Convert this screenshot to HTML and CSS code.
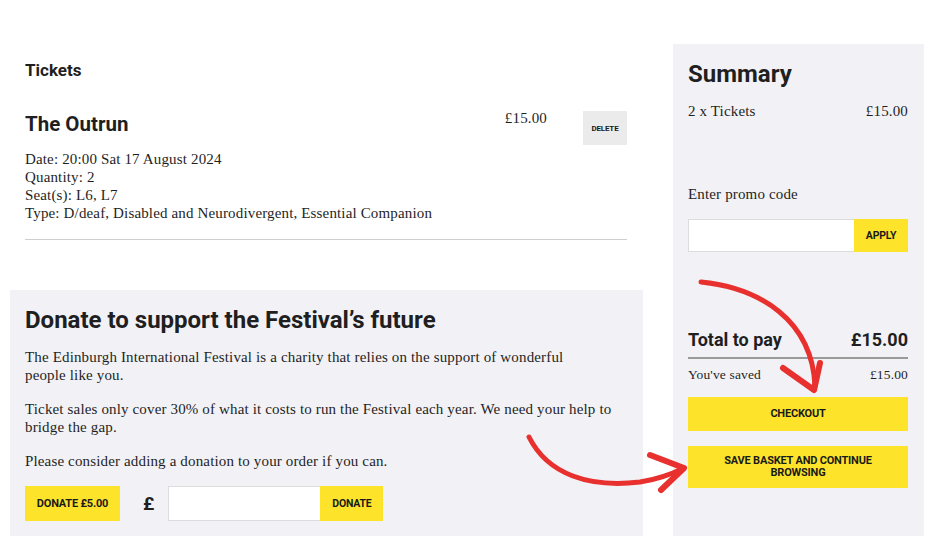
FILE: index.html
```html
<!DOCTYPE html>
<html lang="en">
<head>
    <meta charset="UTF-8">
    <meta name="viewport" content="width=device-width, initial-scale=1.0">
    <title>Basket</title>
    <link rel="stylesheet" href="styles.css">
</head>
<body>
    <div class="page">
        <main class="main">
            <section class="tickets">
                <h3 class="section-title">Tickets</h3>
                <div class="ticket">
                    <div class="ticket-info">
                        <h2 class="ticket-name">The Outrun</h2>
                        <p class="ticket-details">
                            Date: 20:00 Sat 17 August 2024<br>
                            Quantity: 2<br>
                            Seat(s): L6, L7<br>
                            Type: D/deaf, Disabled and Neurodivergent, Essential Companion
                        </p>
                    </div>
                    <div class="ticket-actions">
                        <span class="ticket-price">£15.00</span>
                        <button class="btn btn-grey">Delete</button>
                    </div>
                </div>
            </section>

            <section class="donate">
                <h2 class="donate-title">Donate to support the Festival’s future</h2>
                <p>The Edinburgh International Festival is a charity that relies on the support of wonderful<br>people like you.</p>
                <p>Ticket sales only cover 30% of what it costs to run the Festival each year. We need your help to bridge the gap.</p>
                <p>Please consider adding a donation to your order if you can.</p>
                <div class="donate-row">
                    <button class="btn btn-yellow donate-fixed">Donate £5.00</button>
                    <span class="pound">£</span>
                    <div class="field">
                        <input type="text" class="field-input donate-input">
                        <button class="btn btn-yellow donate-go">Donate</button>
                    </div>
                </div>
            </section>
        </main>

        <aside class="summary">
            <h2 class="summary-title">Summary</h2>
            <div class="line">
                <span>2 x Tickets</span>
                <span>£15.00</span>
            </div>
            <label class="promo-label">Enter promo code</label>
            <div class="field promo">
                <input type="text" class="field-input promo-input">
                <button class="btn btn-yellow promo-apply">Apply</button>
            </div>
            <div class="total">
                <span>Total to pay</span>
                <span>£15.00</span>
            </div>
            <div class="line saved">
                <span>You've saved</span>
                <span>£15.00</span>
            </div>
            <button class="btn btn-yellow btn-wide checkout">Checkout</button>
            <button class="btn btn-yellow btn-wide save">Save basket and continue<br>browsing</button>
        </aside>

        <!-- red annotation arrows drawn over the page -->
        <svg class="arrows" width="940" height="536" viewBox="0 0 940 536">
            <g fill="none" stroke="#e8302e" stroke-linecap="round" stroke-linejoin="round">
                <path d="M701 282 C 760 288, 812 320, 815 386" stroke-width="5"/>
                <path d="M783 368 L 814 390 L 820 363" stroke-width="6"/>
                <path d="M529 437 C 548 475, 590 488, 640 482 C 660 479, 672 474, 684 468" stroke-width="5"/>
                <path d="M650 455 L 684 468 L 661 490" stroke-width="6"/>
            </g>
        </svg>
    </div>
</body>
</html>
```

FILE: styles.css
```css
body {
    margin: 0;
    padding: 0;
    background-color: #ffffff;
    color: #1f1f1f;
    font-family: "Liberation Serif", serif;
    font-size: 15px;
    letter-spacing: 0.15px;
}
h2, h3, p {
    margin: 0;
}
.page {
    position: relative;
    display: flex;
    gap: 30px;
    padding: 44px 16px 0 10px;
    min-height: 536px;
    box-sizing: border-box;
}
.main {
    width: 633px;
    display: flex;
    flex-direction: column;
}
.tickets {
    padding: 16px 16px 0 15px;
}
.section-title {
    font-family: Roboto, sans-serif;
    font-size: 17px;
    font-weight: 700;
    line-height: 20px;
    letter-spacing: 0;
}
.ticket {
    display: flex;
    justify-content: space-between;
    margin-top: 31px;
    padding-bottom: 17px;
    border-bottom: 1px solid #cfcfcf;
}
.ticket-name {
    font-family: Roboto, sans-serif;
    font-size: 20.5px;
    font-weight: 700;
    line-height: 26px;
    letter-spacing: 0;
}
.ticket-details {
    margin-top: 13px;
    line-height: 18px;
}
.ticket-actions {
    display: flex;
    align-items: flex-start;
    gap: 36px;
}
.ticket-price {
    line-height: 18px;
    margin-top: -2px;
}
.btn {
    border: none;
    border-radius: 0;
    cursor: pointer;
    font-family: Roboto, sans-serif;
    font-weight: 700;
    font-size: 10.5px;
    text-transform: uppercase;
    color: #1a1a1a;
    letter-spacing: -0.2px;
    padding: 0;
}
.btn-grey {
    background-color: #ebebeb;
    width: 44px;
    height: 34px;
    font-size: 8px;
}
.btn-yellow {
    background-color: #fde42b;
}
.donate {
    flex: 1;
    margin-top: 50px;
    background-color: #f2f2f6;
    padding: 15px 15px 0 15px;
}
.donate-title {
    font-family: Roboto, sans-serif;
    font-size: 24px;
    font-weight: 700;
    line-height: 30px;
    letter-spacing: 0;
    margin-bottom: 13px;
}
.donate p {
    line-height: 18px;
    margin-bottom: 16px;
}
.donate-row {
    display: flex;
    align-items: center;
    margin-top: 14px;
}
.donate-fixed {
    width: 95px;
    height: 35px;
    font-size: 11px;
}
.pound {
    font-family: Roboto, sans-serif;
    font-weight: 700;
    font-size: 19px;
    margin: 0 14px 0 23px;
}
.field {
    display: flex;
}
.field-input {
    border: 1px solid #dcdcdc;
    border-right: none;
    background: #ffffff;
    padding: 0 8px;
    margin: 0;
    box-sizing: border-box;
    border-radius: 0;
}
.donate-input {
    width: 152px;
    height: 35px;
}
.donate-go {
    width: 63px;
    height: 35px;
}
.summary {
    width: 251px;
    box-sizing: border-box;
    background-color: #f2f2f6;
    padding: 15px 16px 0 15px;
    display: flex;
    flex-direction: column;
}
.summary-title {
    font-family: Roboto, sans-serif;
    font-size: 24px;
    font-weight: 700;
    line-height: 30px;
    letter-spacing: 0;
}
.line {
    display: flex;
    justify-content: space-between;
    line-height: 18px;
    margin-top: 13px;
}
.promo-label {
    line-height: 18px;
    margin-top: 65px;
}
.promo {
    margin-top: 16px;
}
.promo-input {
    width: 166px;
    height: 33px;
}
.promo-apply {
    width: 54px;
    height: 33px;
}
.total {
    display: flex;
    justify-content: space-between;
    font-family: Roboto, sans-serif;
    font-weight: 700;
    font-size: 18px;
    line-height: 24px;
    letter-spacing: 0;
    margin-top: 76px;
    padding-bottom: 5px;
    border-bottom: 2px solid #9a9a9a;
}
.saved {
    font-size: 13.5px;
    margin-top: 7px;
}
.btn-wide {
    width: 100%;
    font-size: 11px;
    line-height: 12px;
}
.checkout {
    height: 34px;
    margin-top: 13px;
}
.save {
    height: 42px;
    margin-top: 15px;
}
.arrows {
    position: absolute;
    top: 0;
    left: 0;
    pointer-events: none;
}
```
